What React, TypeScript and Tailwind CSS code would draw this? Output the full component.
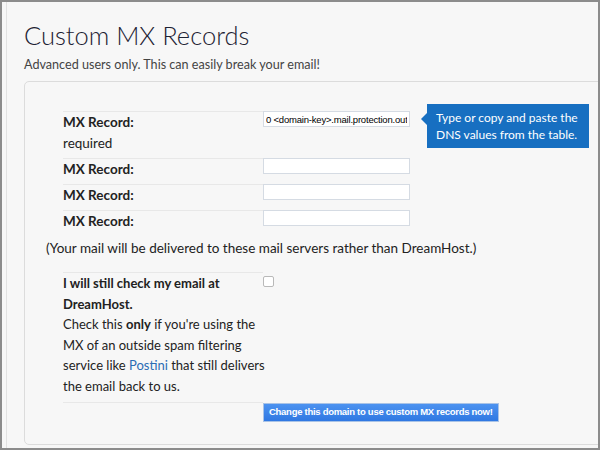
import React from "react";

const body = { fontFamily: "Lato, 'Open Sans', sans-serif" };

function RecordRow({ value, required }: { value?: string; required?: boolean }) {
  return (
    <div className="flex">
      <div className="w-[200px] border-t border-[#e8e8e8] pb-[4px] text-[13.5px] leading-[21px] text-[#222]">
        <div className="font-bold">MX Record:</div>
        {required && <div>required</div>}
      </div>
      <input
        readOnly
        value={value ?? ""}
        className="h-[16px] w-[147px] border border-[#d5dbe3] bg-white px-[2px] text-[9.5px] tracking-[-0.2px] text-black outline-none"
        style={{ fontFamily: "'Liberation Sans', Arial, sans-serif" }}
      />
    </div>
  );
}

export default function App() {
  return (
    <div className="h-[450px] w-[600px] overflow-hidden border-2 border-[#8c8c8c] bg-[#f7f7f7]" style={body}>
      <div className="ml-[4px] h-full border-l border-[#e2e2e2]">
        <h1 className="pl-[17px] pt-[17px] text-[25.5px] font-light leading-[32px] text-[#1d2233]">
          Custom MX Records
        </h1>
        <p className="mt-[5px] pl-[17px] text-[12.6px] leading-[18px] text-[#444]">
          Advanced users only. This can easily break your email!
        </p>

        <div className="relative ml-[17px] mt-[7px] h-[364px] w-[640px] rounded-[5px] border border-[#dcdcdc] pl-[21px] pt-[29px]">
          <div className="ml-[17px]">
            <RecordRow value="0 <domain-key>.mail.protection.out" required />
            <RecordRow />
            <RecordRow />
            <RecordRow />
          </div>

          <p className="mt-[2px] text-[13.5px] leading-[21px] text-[#222]">
            (Your mail will be delivered to these mail servers rather than DreamHost.)
          </p>

          <div className="ml-[17px] mt-[13px] flex">
            <div className="w-[200px] whitespace-nowrap border-t border-[#e8e8e8] pb-[5px] text-[13px] leading-[20.6px] text-[#222]">
              <div className="font-bold">
                I will still check my email at
                <br />
                DreamHost.
              </div>
              <div>
                Check this <b>only</b> if you're using the
                <br />
                MX of an outside spam filtering
                <br />
                service like <span className="text-[#2b6cb5]">Postini</span> that still delivers
                <br />
                the email back to us.
              </div>
            </div>
            <div className="pt-[4px]">
              <div className="h-[11px] w-[11px] rounded-[2px] border border-[#b9b9b9] bg-white" />
            </div>
          </div>
          <div className="ml-[17px] flex">
            <div className="w-[200px] border-t border-[#e8e8e8]" />
            <button
              className="mt-[1px] h-[19px] whitespace-nowrap border border-[#a9c3e6] bg-gradient-to-b from-[#4c92f0] to-[#2f78e2] px-[5px] text-[9.5px] font-bold leading-[16px] tracking-[-0.28px] text-white"
              style={{ fontFamily: "'Liberation Sans', Arial, sans-serif" }}
            >
              Change this domain to use custom MX records now!
            </button>
          </div>

          <div className="absolute left-[402px] top-[22px] h-[44px] w-[162px] whitespace-nowrap bg-[#176fc1] pl-[9px] pt-[5px] text-[12px] leading-[17px] text-white">
            <div className="absolute left-[-6px] top-[9px] h-0 w-0 border-y-[6px] border-r-[6px] border-y-transparent border-r-[#176fc1]" />
            Type or copy and paste the
            <br />
            DNS values from the table.
          </div>
        </div>
      </div>
    </div>
  );
}
